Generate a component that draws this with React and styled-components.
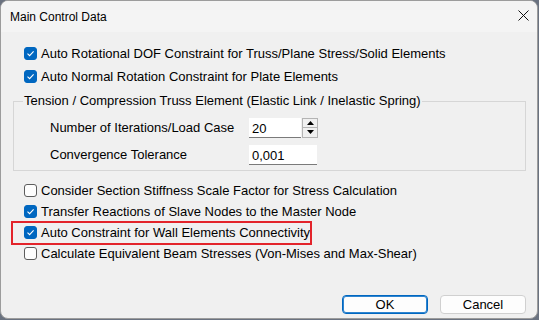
import React from "react";
import styled, { createGlobalStyle } from "styled-components";

const GlobalStyle = createGlobalStyle`
  html, body {
    margin: 0;
    padding: 0;
    background: #6a7280;
  }
  body {
    font-family: "Liberation Sans", Arial, sans-serif;
    font-size: 13px;
    color: #000;
  }
`;

/* ----- window ----- */
const Window = styled.div`
  width: 536px;
  height: 317px;
  border: 1px solid #9c9c9c;
  border-radius: 8px;
  background: #f0f0f0;
  overflow: hidden;
  display: flex;
  flex-direction: column;
`;

const TitleBar = styled.div`
  height: 31px;
  flex: none;
  background: #f4f4f4;
  display: flex;
  align-items: center;
  justify-content: space-between;
  padding: 0 1px 0 9px;
  font-size: 12px;
`;

const CloseBtn = styled.div`
  width: 26px;
  height: 26px;
  display: flex;
  align-items: center;
  justify-content: center;
  margin-top: -2px;
`;

const Body = styled.div`
  flex: 1;
  display: flex;
  flex-direction: column;
  padding: 10px 11px 4px 12px;
`;

/* ----- checkbox rows ----- */
const Row = styled.label`
  position: relative;
  align-self: flex-start;
  display: flex;
  align-items: center;
  height: ${({ h }) => h || 21}px;
  padding-left: 11px;
  gap: 4px;
  white-space: nowrap;
  ${({ highlighted }) =>
    highlighted &&
    `
    &::after {
      content: "";
      position: absolute;
      left: -2px;
      right: -2px;
      top: -1px;
      bottom: -2px;
      border: 2px solid #e3242b;
    }
  `}
`;

const Box = styled.span`
  width: 13px;
  height: 13px;
  box-sizing: border-box;
  border-radius: 3px;
  flex: none;
  display: flex;
  align-items: center;
  justify-content: center;
  background: ${({ checked }) => (checked ? "#0067c0" : "#fdfdfd")};
  border: 1px solid ${({ checked }) => (checked ? "#0067c0" : "#5c5c5c")};
`;

const Check = ({ checked }) => (
  <Box checked={checked}>
    {checked && (
      <svg width="9" height="9" viewBox="0 0 9 9">
        <path d="M1.5 4.6 L3.6 6.6 L7.6 2.4" fill="none" stroke="#fff" strokeWidth="1.1" />
      </svg>
    )}
  </Box>
);

const CheckRow = ({ checked, children, h, highlighted }) => (
  <Row h={h} highlighted={highlighted}>
    <Check checked={checked} />
    <span>{children}</span>
  </Row>
);

/* ----- group box ----- */
const Group = styled.fieldset`
  margin: 5px 0 0 0;
  padding: 8px 0 5px 36px;
  border: 1px solid #d6d6d6;
  display: flex;
  flex-direction: column;
  gap: 6px;
`;

const Legend = styled.legend`
  margin-left: -27px;
  padding: 0 1px;
  line-height: 16px;
`;

const FieldRow = styled.div`
  display: flex;
  align-items: center;
  height: 21px;
`;

const FieldLabel = styled.span`
  width: 199px;
`;

const Input = styled.div`
  width: ${({ w }) => w}px;
  height: 20px;
  box-sizing: border-box;
  background: #fff;
  border-bottom: 1px solid #7a7a7a;
  padding: 3px 3px 0;
  font-size: 13px;
`;

const Spinner = styled.div`
  width: 16px;
  height: 20px;
  margin-left: 1px;
  display: flex;
  flex-direction: column;
  border: 1px solid #b4b4b4;
  box-sizing: border-box;
`;

const SpinBtn = styled.div`
  flex: 1;
  display: flex;
  align-items: center;
  justify-content: center;
  background: #f0f0f0;
  border-top: ${({ bottom }) => (bottom ? "1px solid #b4b4b4" : "none")};
`;

const Arrow = ({ down }) => (
  <svg width="7" height="4" viewBox="0 0 7 4">
    <path d={down ? "M0 0 H7 L3.5 4 Z" : "M0 4 H7 L3.5 0 Z"} fill="#000" />
  </svg>
);

/* ----- buttons ----- */
const Footer = styled.div`
  margin-top: auto;
  display: flex;
  justify-content: flex-end;
  gap: 12px;
`;

const Button = styled.button`
  width: 86px;
  height: 19px;
  box-sizing: border-box;
  border-radius: 4px;
  font-family: "Liberation Sans", Arial, sans-serif;
  font-size: 13px;
  line-height: 1;
  color: #000;
  padding: 0;
  background: #fdfdfd;
  border: 1px solid ${({ primary }) => (primary ? "#0067c0" : "#d0d0d0")};
  box-shadow: ${({ primary }) => (primary ? "inset 0 0 0 1px #2f84cf" : "none")};
`;

export default function App() {
  return (
    <>
      <GlobalStyle />
      <Window>
        <TitleBar>
          <span>Main Control Data</span>
          <CloseBtn>
            <svg width="11" height="11" viewBox="0 0 11 11">
              <path d="M0.5 0.5 L10.5 10.5 M10.5 0.5 L0.5 10.5" stroke="#111" strokeWidth="1" />
            </svg>
          </CloseBtn>
        </TitleBar>
        <Body>
          <CheckRow checked h={23}>
            Auto Rotational DOF Constraint for Truss/Plane Stress/Solid Elements
          </CheckRow>
          <CheckRow checked h={23}>
            Auto Normal Rotation Constraint for Plate Elements
          </CheckRow>
          <Group>
            <Legend>Tension / Compression Truss Element (Elastic Link / Inelastic Spring)</Legend>
            <FieldRow>
              <FieldLabel>Number of Iterations/Load Case</FieldLabel>
              <Input w={52}>20</Input>
              <Spinner>
                <SpinBtn>
                  <Arrow />
                </SpinBtn>
                <SpinBtn bottom>
                  <Arrow down />
                </SpinBtn>
              </Spinner>
            </FieldRow>
            <FieldRow>
              <FieldLabel>Convergence Tolerance</FieldLabel>
              <Input w={68}>0,001</Input>
            </FieldRow>
          </Group>
          <div style={{ height: 9 }} />
          <CheckRow>Consider Section Stiffness Scale Factor for Stress Calculation</CheckRow>
          <CheckRow checked>Transfer Reactions of Slave Nodes to the Master Node</CheckRow>
          <CheckRow checked highlighted>
            Auto Constraint for Wall Elements Connectivity
          </CheckRow>
          <CheckRow>Calculate Equivalent Beam Stresses (Von-Mises and Max-Shear)</CheckRow>
          <Footer>
            <Button primary>OK</Button>
            <Button>Cancel</Button>
          </Footer>
        </Body>
      </Window>
    </>
  );
}
